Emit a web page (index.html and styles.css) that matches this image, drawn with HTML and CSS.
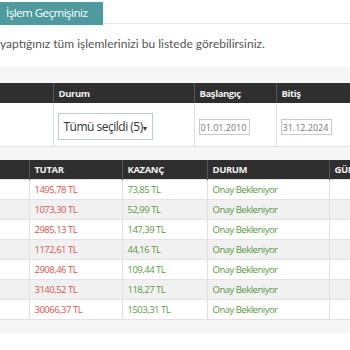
FILE: index.html
```html
<!DOCTYPE html>
<html lang="tr">
<head>
    <meta charset="UTF-8">
    <meta name="viewport" content="width=device-width, initial-scale=1.0">
    <title>İşlem Geçmişiniz</title>
    <link rel="stylesheet" href="styles.css">
</head>
<body>
    <div class="tab-bar">
        <div class="tab">İşlem Geçmişiniz</div>
    </div>

    <p class="desc">yaptığınız tüm işlemlerinizi bu listede görebilirsiniz.</p>

    <div class="band"></div>

    <table class="filters">
        <colgroup>
            <col style="width: 53px">
            <col style="width: 141px">
            <col style="width: 82px">
            <col>
        </colgroup>
        <thead>
            <tr>
                <th></th>
                <th>Durum</th>
                <th>Başlangıç</th>
                <th>Bitiş</th>
            </tr>
        </thead>
        <tbody>
            <tr>
                <td></td>
                <td><button class="multi-select">Tümü seçildi (5)<span class="caret">▾</span></button></td>
                <td><input class="date" type="text" value="01.01.2010"></td>
                <td><input class="date" type="text" value="31.12.2024"></td>
            </tr>
        </tbody>
    </table>

    <div class="band small"></div>

    <table class="history">
        <colgroup>
            <col style="width: 29px">
            <col style="width: 93px">
            <col style="width: 85px">
            <col style="width: 122px">
            <col>
        </colgroup>
        <thead>
            <tr>
                <th></th>
                <th>Tutar</th>
                <th>Kazanç</th>
                <th>Durum</th>
                <th>Gün</th>
            </tr>
        </thead>
        <tbody id="rows"></tbody>
    </table>

    <div class="band small"></div>

    <script>
        const items = [
            ["1495,78 TL", "73,85 TL"],
            ["1073,30 TL", "52,99 TL"],
            ["2985,13 TL", "147,39 TL"],
            ["1172,61 TL", "44,16 TL"],
            ["2908,46 TL", "109,44 TL"],
            ["3140,52 TL", "118,27 TL"],
            ["30066,37 TL", "1503,31 TL"]
        ];
        const rows = document.getElementById("rows");

        items.forEach(([amount, gain]) => {
            const tr = document.createElement("tr");
            tr.innerHTML = `
                <td></td>
                <td class="amount">${amount}</td>
                <td class="gain">${gain}</td>
                <td class="status">Onay Bekleniyor</td>
                <td></td>`;
            rows.appendChild(tr);
        });
    </script>
</body>
</html>
```

FILE: styles.css
```css
body {
    margin: 0;
    font-family: 'Open Sans', sans-serif;
    color: #333;
    background: #fff;
    overflow: hidden;
}

.tab-bar {
    height: 23px;
    border-bottom: 1px solid #e6e6e6;
}

.tab {
    box-sizing: border-box;
    display: inline-block;
    width: 103px;
    height: 23px;
    padding-left: 6px;
    background: #4e9b9f;
    color: #fff;
    font-size: 11.5px;
    letter-spacing: -0.5px;
    line-height: 22px;
    white-space: nowrap;
}

.desc {
    margin: 0;
    height: 43px;
    line-height: 39px;
    font-family: 'Lato', sans-serif;
    font-size: 12px;
    color: #555;
    white-space: nowrap;
}

.band {
    height: 16px;
    background: #f6f6f6;
}

.band.small {
    height: 13px;
    border-top: 1px solid #e2e2e2;
}

table {
    width: 100%;
    min-width: 350px;
    border-collapse: collapse;
    table-layout: fixed;
}

th {
    background: #2f2f2f;
    color: #f0f0f0;
    font-size: 9.5px;
    font-weight: bold;
    letter-spacing: -0.4px;
    text-align: left;
    padding: 0 5px;
    height: 20px;
    white-space: nowrap;
    overflow: hidden;
    border-left: 1px solid #555;
}

th:first-child {
    border-left: none;
}

td {
    border-left: 1px solid #e0e0e0;
    padding: 0 5px;
    white-space: nowrap;
    overflow: hidden;
}

td:first-child {
    border-left: none;
}

.filters td {
    height: 43px;
    padding: 0 4px;
    vertical-align: middle;
}

.multi-select {
    width: 95px;
    height: 27px;
    margin-top: 4px;
    padding: 0 0 0 5px;
    border: 1px solid #b9cdd3;
    background: #fff;
    font-family: 'Open Sans', sans-serif;
    font-size: 12px;
    letter-spacing: -0.5px;
    color: #333;
    text-align: left;
    white-space: nowrap;
}

.caret {
    font-size: 8px;
}

.date {
    box-sizing: border-box;
    width: 51px;
    height: 16px;
    margin-top: 2px;
    padding: 0 1px;
    border: 1px solid #c8c8c8;
    font-family: 'Open Sans', sans-serif;
    font-size: 9px;
    color: #777;
}

.history th {
    height: 19px;
    text-transform: uppercase;
}

.history td {
    height: 19px;
    font-size: 9.5px;
    letter-spacing: -0.5px;
    border-top: 1px solid #e4e4e4;
}

.history tbody tr:nth-child(even) td {
    background: #f1f1f1;
}

.amount {
    color: #d9534f;
}

.gain,
.status {
    color: #5a9a3c;
}
```
